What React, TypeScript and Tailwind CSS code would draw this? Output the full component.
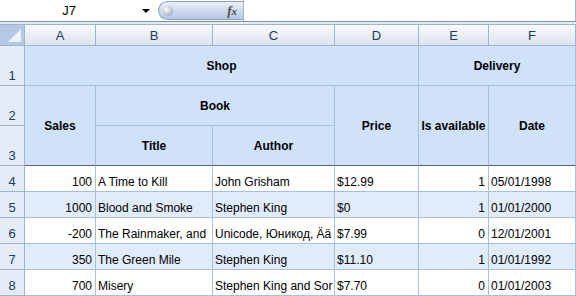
import React from 'react';

type Row = {
  n: number;
  sales: string;
  title: string;
  author: string;
  price: string;
  avail: string;
  date: string;
};

const rows: Row[] = [
  { n: 4, sales: '100', title: 'A Time to Kill', author: 'John Grisham', price: '$12.99', avail: '1', date: '05/01/1998' },
  { n: 5, sales: '1000', title: 'Blood and Smoke', author: 'Stephen King', price: '$0', avail: '1', date: '01/01/2000' },
  { n: 6, sales: '-200', title: 'The Rainmaker, and', author: 'Unicode, Юникод, Ää', price: '$7.99', avail: '0', date: '12/01/2001' },
  { n: 7, sales: '350', title: 'The Green Mile', author: 'Stephen King', price: '$11.10', avail: '1', date: '01/01/1992' },
  { n: 8, sales: '700', title: 'Misery', author: 'Stephen King and Sor', price: '$7.70', avail: '0', date: '01/01/2003' },
];

const colHead =
  'flex items-center justify-center pt-[2px] border-r border-b border-[#9db5d0] bg-gradient-to-b from-[#f9fafc] to-[#dce3ed] text-[13px] text-[#1d3a60]';
const rowHead =
  'flex items-end justify-center pb-[1px] border-r border-b border-[#9db5d0] bg-[#e4ecf7] text-[13px] leading-[16px] text-[#1d3a60]';
const head =
  'flex items-center justify-center border-r border-b border-[#a9c0da] bg-[#cfe2fa] text-[12px] font-bold text-black';
const headDark =
  'flex items-center justify-center border-r border-b border-r-[#a9c0da] border-b-[#5b6776] bg-[#cfe2fa] text-[12px] font-bold text-black';

const App: React.FC = () => {
  return (
    <div className="w-[576px] h-[296px] overflow-hidden bg-white font-['Liberation_Sans',Arial,sans-serif]">
      {/* formula bar */}
      <div className="flex h-[22px] border-b border-[#7d8fa6] bg-white">
        <div className="flex items-center w-[158px]">
          <span className="w-[138px] text-center text-[13px] text-black">J7</span>
          <span className="ml-[4px] w-0 h-0 border-l-[4px] border-r-[4px] border-t-[4px] border-l-transparent border-r-transparent border-t-black" />
        </div>
        <div className="flex items-center w-[85px] h-[19px] mt-[1px] rounded-l-full border border-r-0 border-[#8aa2c2] bg-gradient-to-b from-[#eaf0f8] via-[#cfdcee] to-[#b4c7e2]">
          <span className="ml-[4px] w-[10px] h-[10px] rounded-full bg-[radial-gradient(circle_at_35%_35%,#ffffff,#8593a6)]" />
          <span className="ml-auto mr-[6px] font-['Liberation_Serif',serif] italic font-bold text-[13px] leading-none text-[#4a4a4a]">
            f<span className="text-[11px]">x</span>
          </span>
        </div>
        <div className="flex-1 border-l border-r border-[#a3b4c9] bg-white" />
      </div>
      <div className="h-[3px] bg-[#e6ecf4] border-b border-[#9db5d0]" />

      {/* sheet */}
      <div className="grid grid-cols-[25px_71px_117px_122px_84px_70px_87px] grid-rows-[21px_40px_40px_40px_26px_26px_26px_26px_26px]">
        {/* column headers */}
        <div className="relative border-r border-b border-[#9db5d0] bg-[#b3c9e6]">
          <div className="absolute right-[3px] bottom-[3px] w-0 h-0 border-t-[13px] border-t-transparent border-r-[13px] border-r-[#f4f7fb] opacity-90" />
        </div>
        <div className={colHead}>A</div>
        <div className={colHead}>B</div>
        <div className={colHead}>C</div>
        <div className={colHead}>D</div>
        <div className={colHead}>E</div>
        <div className={colHead}>F</div>

        {/* header rows */}
        <div className={`${rowHead} col-start-1 row-start-2`}>1</div>
        <div className={`${rowHead} col-start-1 row-start-3`}>2</div>
        <div className={`${rowHead} col-start-1 row-start-4`}>3</div>

        <div className={`${head} col-start-2 col-span-4 row-start-2`}>Shop</div>
        <div className={`${head} col-start-6 col-span-2 row-start-2`}>Delivery</div>
        <div className={`${headDark} col-start-2 row-start-3 row-span-2`}>Sales</div>
        <div className={`${head} col-start-3 col-span-2 row-start-3`}>Book</div>
        <div className={`${headDark} col-start-3 row-start-4`}>Title</div>
        <div className={`${headDark} col-start-4 row-start-4`}>Author</div>
        <div className={`${headDark} col-start-5 row-start-3 row-span-2`}>Price</div>
        <div className={`${headDark} col-start-6 row-start-3 row-span-2`}>Is available</div>
        <div className={`${headDark} col-start-7 row-start-3 row-span-2`}>Date</div>

        {/* data rows */}
        {rows.map((r, i) => {
          const bg = i % 2 === 1 ? 'bg-[#e0ebfb]' : 'bg-white';
          const cell = `flex items-end pb-[2px] border-r border-b border-[#a9c0da] ${bg} text-[12px] leading-[14px] text-black whitespace-nowrap overflow-hidden`;
          return (
            <React.Fragment key={r.n}>
              <div className={rowHead}>{r.n}</div>
              <div className={`${cell} justify-end pr-[3px]`}>{r.sales}</div>
              <div className={`${cell} pl-[2px]`}>{r.title}</div>
              <div className={`${cell} pl-[2px]`}>{r.author}</div>
              <div className={`${cell} pl-[2px]`}>{r.price}</div>
              <div className={`${cell} justify-end pr-[3px]`}>{r.avail}</div>
              <div className={`${cell} pl-[2px]`}>{r.date}</div>
            </React.Fragment>
          );
        })}
      </div>
    </div>
  );
};

export default App;
